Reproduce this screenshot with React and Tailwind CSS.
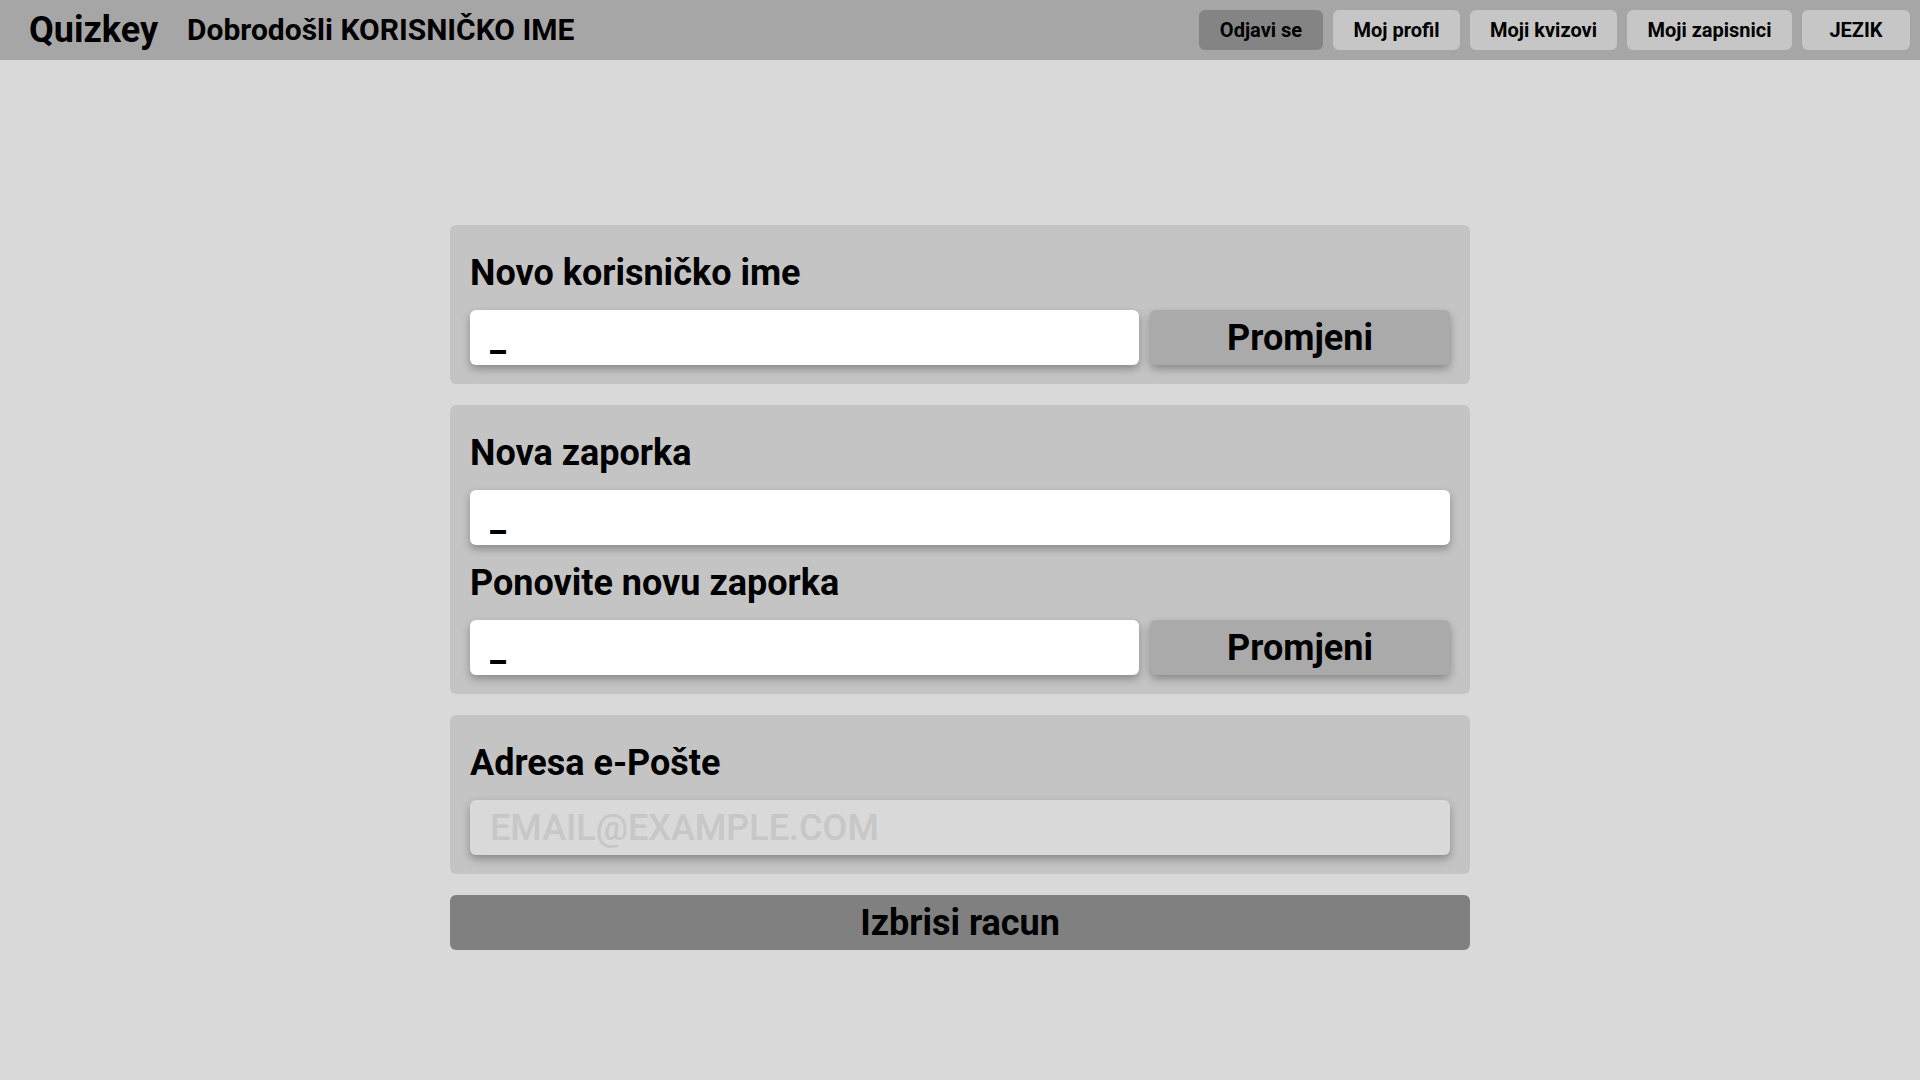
import React from "react";

const font = { fontFamily: "Roboto, 'Noto Sans', sans-serif" };

function NavButton({ children, w, dark }) {
  return (
    <button
      className={
        "h-[40px] rounded-[6px] text-[20px] font-bold text-black flex items-center justify-center " +
        w +
        " " +
        (dark ? "bg-[#848484]" : "bg-[#c6c6c6]")
      }
    >
      {children}
    </button>
  );
}

function Label({ children, className = "" }) {
  return (
    <div className={"text-[36px] font-bold leading-[42px] text-black mb-[16px] " + className}>
      {children}
    </div>
  );
}

function TextInput({ className = "" }) {
  return (
    <input
      readOnly
      value="_"
      className={
        "h-[55px] bg-white rounded-[6px] px-[20px] text-[36px] font-bold text-black outline-none shadow-[0_4px_8px_rgba(0,0,0,0.3)] " +
        className
      }
      style={font}
    />
  );
}

function ChangeButton() {
  return (
    <button
      className="w-[300px] h-[55px] shrink-0 bg-[#aaaaaa] rounded-[6px] text-[36px] font-bold text-black shadow-[0_4px_8px_rgba(0,0,0,0.3)]"
      style={font}
    >
      Promjeni
    </button>
  );
}

export default function App() {
  return (
    <div className="min-h-[1080px] bg-[#d9d9d9] text-black" style={font}>
      <header className="h-[60px] bg-[#a6a6a6] flex items-center justify-between">
        <div className="flex items-center pl-[29px]">
          <span className="text-[36px] font-bold leading-none">Quizkey</span>
          <span className="text-[30px] font-bold leading-none ml-[29px]">
            Dobrodošli KORISNIČKO IME
          </span>
        </div>
        <nav className="flex gap-[10px] pr-[10px]">
          <NavButton w="w-[124px]" dark>
            Odjavi se
          </NavButton>
          <NavButton w="w-[127px]">Moj profil</NavButton>
          <NavButton w="w-[147px]">Moji kvizovi</NavButton>
          <NavButton w="w-[165px]">Moji zapisnici</NavButton>
          <NavButton w="w-[108px]">JEZIK</NavButton>
        </nav>
      </header>

      <main className="pt-[165px] pb-[100px]">
        <div className="w-[1020px] mx-auto flex flex-col gap-[21px]">
          <section className="bg-[#c4c4c4] rounded-[6px] px-[20px] pt-[27px] pb-[19px]">
            <Label>Novo korisničko ime</Label>
            <div className="flex gap-[11px]">
              <TextInput className="flex-1 min-w-0" />
              <ChangeButton />
            </div>
          </section>

          <section className="bg-[#c4c4c4] rounded-[6px] px-[20px] pt-[27px] pb-[19px]">
            <Label>Nova zaporka</Label>
            <TextInput className="w-full" />
            <Label className="mt-[17px]">Ponovite novu zaporka</Label>
            <div className="flex gap-[11px]">
              <TextInput className="flex-1 min-w-0" />
              <ChangeButton />
            </div>
          </section>

          <section className="bg-[#c4c4c4] rounded-[6px] px-[20px] pt-[27px] pb-[19px]">
            <Label>Adresa e-Pošte</Label>
            <input
              readOnly
              placeholder="EMAIL@EXAMPLE.COM"
              className="w-full h-[55px] bg-[#d9d9d9] rounded-[6px] px-[20px] text-[36px] font-medium text-black placeholder:text-[#c7c7c7] outline-none shadow-[0_4px_8px_rgba(0,0,0,0.3)]"
              style={font}
            />
          </section>

          <button
            className="w-full h-[55px] bg-[#808080] rounded-[6px] text-[36px] font-bold text-black"
            style={font}
          >
            Izbrisi racun
          </button>
        </div>
      </main>
    </div>
  );
}
